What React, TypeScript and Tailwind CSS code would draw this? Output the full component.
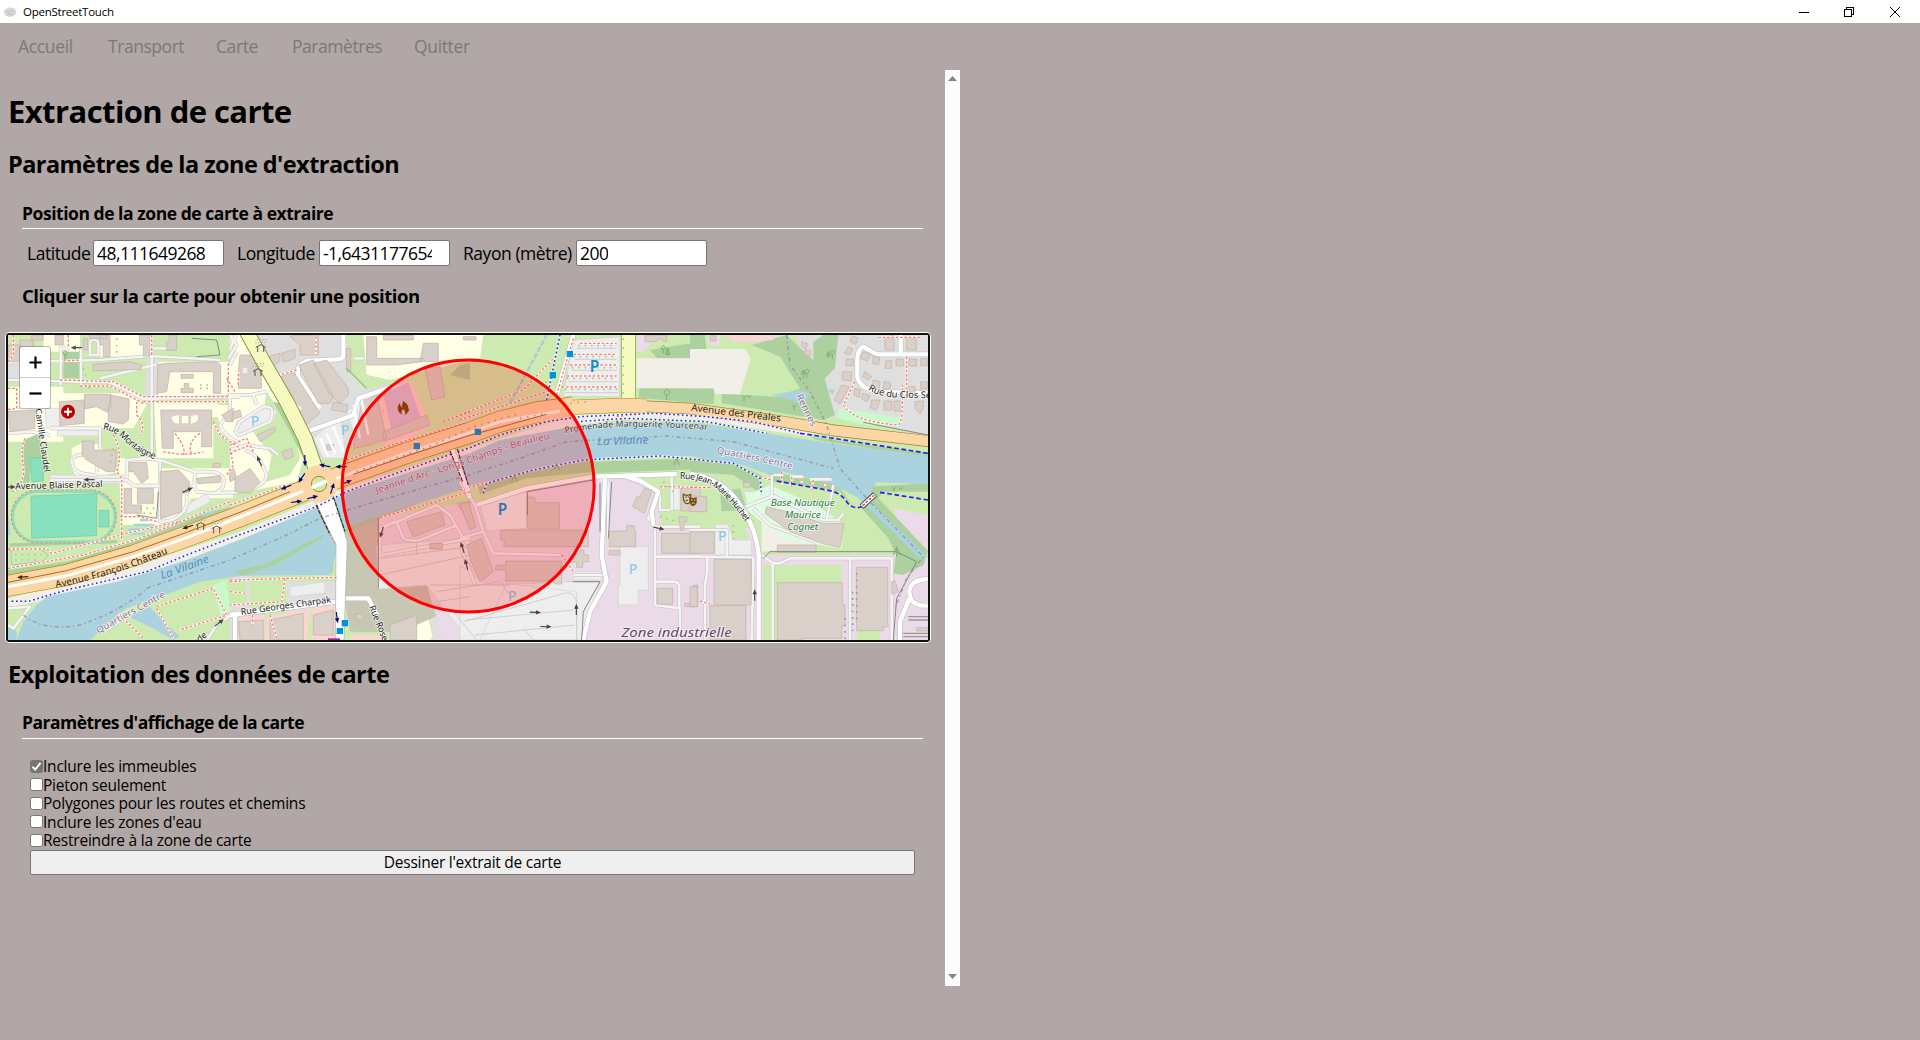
import React from "react";

type Quad = [string, string, string, string];

/* The map is divided into four side-by-side sheets, each 690 units wide. */
const SHEETS = [0, 690, 1380, 2070];

function Layer({
  d,
  fill = "none",
  stroke = "none",
  w = 0,
  dash,
  cap = "butt",
}: {
  d: Quad;
  fill?: string;
  stroke?: string;
  w?: number;
  dash?: string;
  cap?: "butt" | "round";
}) {
  return (
    <g fill={fill} stroke={stroke} strokeWidth={w} strokeDasharray={dash} strokeLinecap={cap} strokeLinejoin="round">
      {d.map((p, i) => (p ? <path key={i} d={p} transform={`translate(${SHEETS[i]} 0)`} /> : null))}
    </g>
  );
}

const YELLOW: Quad = [
  "M24 185H190V350H24z M170 205H400L440 240L400 310H170z M300 30H455V95H300z M130 30H240V80H130z M470 110H700V215H460z M462 235H655V275L600 280V300H640V400H470z M355 400H480V600H365z M480 430H600L560 560L480 600z M650 240H720V370L660 320z M215 370L250 350L300 360L352 440L240 475L215 430z M690 30H720V215H690z M560 430H700V520H570z",
  "M0 30H40L130 200L190 330L220 400L200 470L0 510z M400 30H720V105L480 165L410 150z M520 900L590 860L640 900L600 945H530z",
  "M0 30H70L60 100H0z",
  "",
];
const GREY: Quad = [
  "M24 110H60V170H24z M440 100H475V210H435z",
  "M75 30H350V130L410 195L520 165L580 300L350 370L262 410L130 200z M0 740H60V945H0z M170 770H320V860H170z M590 860L640 850L720 945H610z",
  "",
  "M120 30H270V50H120z M320 30H714V330L430 275L330 100z",
];
const GRASS: Quad = [
  "M65 100H130V160H65z",
  "M110 200L190 320L210 400L180 450L110 470L125 390L60 310L100 260z M410 150L480 165L440 185L400 190L340 130L360 110z M60 770L160 770L150 820L90 815z M0 765H50V840H0z",
  "",
  "",
];
const FOREST: Quad = [
  "M192 80H238V160H190z M70 345L120 325L125 400H90V470L70 475z M30 655L350 645L352 655L30 665z M24 735L200 710L400 650L530 590L690 545V552L400 668L200 725L24 752z M560 760L720 700V735L600 770z",
  "M130 230L150 235L240 400L225 410L180 320z M290 640L312 660L308 745L280 745z M340 605L440 570L580 530L440 585L345 620z M690 120L720 115V165L660 150z",
  "M570 75L720 50V100L600 110z M540 180L720 190V235L535 218z M400 410L720 400V432L400 445z M50 470L300 410L402 405V440L200 460L60 508z",
  "M0 30H45L50 85L0 100z M185 60L290 30L395 130L435 270L400 285L95 235V207L260 215L330 190L270 95z M0 190H75L70 237L0 235z M370 50L400 30H445L435 130L400 165L370 120z M0 398L110 402L215 452L213 512L190 490L130 450L0 440z M360 335L714 383V397L380 345z M530 485L714 475V500L580 500L565 520L714 678L700 720L640 750L610 745L618 690L595 640L515 550z M90 500L150 490L170 555L95 558z M240 440L440 475L490 545L450 500L240 468z",
];
const LIGHT: Quad = [
  "",
  "",
  "M530 100H720V190H530z",
  "M0 72H165L182 100L150 207H75L70 190H0z M215 560L380 650L370 665L215 680z",
];
const PARKING: Quad = [
  "M150 450H370V475H150z M172 315H300V333H172z M560 540L620 505L632 530L560 568z M135 250H180V310H140z",
  "M20 290L120 240L140 260L130 290L40 330L15 325z M250 340L330 270L350 400L280 400z M350 260L420 210L445 320L380 350z M180 785L285 770V805L180 815z M440 660L720 640V945L640 850L590 780L445 792z",
  "M60 540L200 500V610L80 617z M340 740H425V765H340z M480 665H565V795H535V840H475V780H480z M340 45L480 35L478 215L310 213z M0 720L80 780L340 770L420 770L370 945H0z M140 775L350 800V945H60z M630 490H660V555H630z",
  "M75 598H115L130 645H185V690H75z M160 500H200L215 530L180 545z",
];
const PINKISH: Quad = [
  "",
  "M35 870H105L100 945H20z M110 875L240 850L230 945H105z M245 850L325 840V945H245z M440 205L475 195L530 345L455 360z M360 930H470V945H360z M475 190L540 165L605 300L530 345z",
  "",
  "M90 30H245L250 45L150 50z",
];
const BUILDINGS: Quad = [
  "M24 60H60V110H24z M60 45H100V70H60z M95 30H130V45H95z M165 30H190V60H165z M250 40H262V75H250z M300 30H330V95H310V60H300z M270 30H320V40H270z M418 30H450V93H430V60H418z M508 30H530V75H500V50H508z M280 118L390 110L425 120V133L310 137H280z M178 230L253 225V295L180 302z M253 208H332V248L322 262L290 245L253 252z M333 210L388 222L385 285L370 297L325 290V250z M24 260L104 254L105 310L30 320z M474 118L500 115L650 110L662 120V205H640V140H510L500 200L470 205z M543 148H580V160H543z M553 175H566V190H580V203H543V190H553z M482 255H635V365H605V320H520V370H487z M246 348H282V375H350L345 440H320L260 405L246 390z M387 412H440L445 460L425 475L400 440H387z M372 490H395V540H425V565H372z M412 490H460V535H412z M480 440L537 435L568 470V500L545 505V560L482 582z M590 460L662 452V472L592 476z M640 415H660V427H637z M665 270L700 250V290L680 290z M686 435L700 428L710 460L690 470z",
  "M30 90H90L95 190H25V140z M115 95L150 85V110L125 125z M155 85L195 72V100L160 112z M180 35L190 30H265V90H210V60z M130 165L190 140L270 265L215 310L195 290z M350 70H362V140H350z M205 120L250 105L310 215L300 235L265 235z M250 115L290 105L355 190V210L330 235L300 210z M310 230L355 240L350 262L305 255z M410 35H440V100H580L575 110L500 120H410z M460 30H550V45H460z M580 55H625V110H570z M10 260L30 255L35 275L5 285z M80 330L135 305V320L90 350z M155 380L185 370L190 395L165 405z M15 460L60 430L90 470L60 505L15 500z M585 130L630 125L645 215L605 225z M395 230L440 210L470 340L420 360L370 370z M460 320L590 270L600 300L460 350z M530 590L635 560L645 600L550 635z M600 655H637V672H600z M680 535L720 530V590z M25 890L100 885V945H30z M120 885L220 865V945H120z M250 870L310 855V930H250z M375 870L395 865L400 880L385 888z M480 900L560 870V945H480z M290 360L310 357L311 375H290z",
  "M10 35H48V45H10z M202 515L225 518V533H298V610H202z M122 615H385V665H132V645H122z M20 660L65 640L100 740L60 770L30 700z M137 708H305V777H283V768H137V735H105L110 720H137z M345 685H360V675H372V690H385V710H368V727H350V712H332V700H345z M553 490L577 495L553 565L518 545L530 515H540z M448 618H500V602H523V617H527V665H448z M447 677H480V690H447z M592 790H638V838H592z M605 625H720V685H605z M674 835H700V780H713V845H674z M663 490H720V558H663z M657 575H680V590H672V615H660V590H657z M555 30H620V50L600 40L585 50H555z M0 540L25 530L48 605L30 615z",
  "M0 512L50 515V560H0z M0 620H73V685H0z M72 703H183V840H72z M60 842H168V945H60z M262 773H457V838L465 840V903H455V940H340V945H262z M500 727H593V893L595 905H580V917H500z M262 660H378V682H262z M230 545L290 560L400 595H462L450 668L395 655L300 620L225 565z M605 770L615 768L625 800L605 808z M680 908H714V918H680z M455 180L478 185L450 237L432 225z M475 65L488 72L480 90L464 84z M487 32L505 40L497 58L480 50z M520 80L543 88L532 108L512 100z M550 92L570 98L565 120L548 115z M468 102H490V122H468z M457 140L485 140L483 168L457 165z M525 140L545 155L535 165L518 155z M587 108L605 106V130H585z M618 102H640V123H618z M657 102H680V123H657z M692 100H712V122H692z M550 165L570 170L568 190L545 185z M582 170L602 172L600 192H580z M692 170H712V192H692z M652 185H675V202H652z M495 190L512 195L507 217L492 210z M518 205L540 212L530 230L515 222z M545 225L570 225L560 255L540 248z M582 228H605V255H582z M612 228H635V258H612z M675 230L700 228V250L690 268L675 250z M648 40H680V75H650z M585 40H612V75H585z M600 32H610V40H600z M335 50L352 55L348 72L335 65z M345 75H362V92H345z M0 785H22V845H0z M160 472H182V487H160z M60 32H78V48H60z",
];
const PATHS_RED: Quad = [
  "M40 30V90L24 110 M24 190H50V250L24 255 M205 30V65 M190 108L240 105 M180 165L340 170L430 215H690 M430 230H690 M240 183H330L430 235 M75 340Q60 370 72 440Q60 500 35 500 M360 575H420L470 590 M455 30V95 M685 115V210 M680 160L705 200 M640 290L660 330L720 370 M410 230V270Q440 300 420 330 M340 330Q370 380 350 440L365 460V645 M525 325Q560 370 550 390 M600 325Q560 350 575 390 M490 380Q560 395 610 380 M690 370L700 420L680 450 M24 672H140L155 685L400 620L540 590 M470 850L520 940 M470 845L640 790L680 870L540 915 M350 860L430 940 M24 730L250 690L420 640L690 530 M690 770H720",
  "M0 765L320 757 M25 180V140 M0 540L170 480 M130 155L200 135 M0 360L50 340L70 380 M165 760L155 830L0 840 M0 800L45 805 M68 870V900 M120 870L140 940 M0 385L60 360 M350 405L500 355L720 290 M450 578L720 500 M640 290L720 260 M258 35V90",
  "M0 270L190 195L280 100 M0 285L200 220L260 200 M360 55H470 M340 88H470 M330 120H470 M320 153H470 M305 186H475 M0 495L90 470 M340 40L290 210 M305 690L340 740 M600 485L720 487 M470 275L530 268",
  "M0 487H60 M565 37H690 M495 170L460 240Q490 290 625 300Q640 290 637 180 M650 95V190 M210 455L245 465 M275 440V480 M305 455V485 M335 460V485 M370 465L365 495 M405 470V500 M30 828L60 838",
];
const MINOR: Quad = [
  "M24 112L300 105L450 93L660 105 M24 165L330 172L430 222L720 215 M300 160L470 118 M455 90V400 M182 65V180 M243 65V180 M182 70H210 M270 50V90 M270 50Q280 40 295 50V90H265 M24 325L90 320L150 330 M150 310H300V370 M24 255H60 M150 465H380L400 482H480 M380 460V405L430 400L480 405V590Q540 590 560 540V500L580 480 M480 405L585 440L620 440Q670 440 672 470Q670 500 640 505L590 500Q580 490 585 440 M640 505L720 500 M690 210V260L660 300Q670 330 720 355 M690 30L710 60L685 100 M530 70H460 M220 400Q230 385 250 390 M215 400Q210 450 290 450 M290 440V400 M24 850L90 845L40 910L24 900 M320 915L370 880 M620 945L650 900L700 865H720",
  "M0 210H60L110 200 M70 210L80 240 M0 375L50 360L120 370L145 390 M45 375Q90 390 110 450Q110 490 0 505 M20 310L30 290L100 245Q140 240 120 290L30 330Q15 330 20 310 M450 690V620Q460 600 500 590L620 540L660 570L700 640L720 660 M500 590L520 640Q540 650 570 645L680 600 M455 690L720 640 M20 30L0 70 M0 120L20 80 M375 100H400",
  "M0 470L45 540L70 620L100 685L300 690 M0 640L70 620 M420 465L445 470V640 M425 720L440 750H340 M345 750H425 M0 660L45 780 M535 450L545 475L600 510V555H630 M635 450V555 M500 455L590 500L565 580L585 605H720 M585 605V840L660 850V945 M585 695H720 M585 770H640Q660 770 658 790V850",
  "M0 695L185 697 M110 695V615H0 M52 697V740L45 780V945 M190 697V720L185 945 M215 690L250 715H270L300 700H605V945 M248 715V945 M480 703V945 M165 545L245 515V450 M245 510L400 585H445L460 565 M410 585L430 480 M250 450H280 M300 455H340 M360 463H425 M190 550L240 600L375 650",
];
const STREETS: Quad = [
  "",
  "M340 30V90Q340 103 320 103L230 108Q195 120 205 155L270 250 M230 320L370 270L385 220L500 180 M328 820H415L440 870 M0 870L320 830 M15 860V945 M665 370L720 520",
  "M50 540L200 490L400 455L650 447 M435 460L425 690L440 770L390 860L370 945 M500 455L545 470L595 500L575 560L580 600 M290 210L340 30",
  "M0 447Q100 460 150 540Q200 610 206 690V945 M714 88H560L520 65Q500 75 502 110V155Q510 190 560 200L714 205 M632 88V30 M714 762Q660 765 658 800Q660 840 700 842H714 M658 820L630 890V945",
];

const BLUEDOTS =
  "M35 829H85L200 795L440 740L560 690L690 640L950 545L1040 500L1160 455L1410 368L1500 330L1640 290L1740 275L1960 265L2120 275L2260 290L2400 325 M1450 505L1460 475L1600 435L1750 405L1980 393L2200 415L2280 460L2285 510 M1640 225L1680 30 M1730 290L1880 280L2120 290L2300 325";

function Arrow({ x, y, a, c = "#444" }: { x: number; y: number; a: number; c?: string }) {
  return (
    <g transform={`translate(${x} ${y}) rotate(${a})`} fill={c} stroke={c}>
      <path d="M-17 0H6" strokeWidth="3.5" />
      <path d="M17 0L2 -6.500V6.500z" stroke="none" />
    </g>
  );
}

function Label({
  x,
  y,
  a = 0,
  s = 28,
  len,
  c = "#222",
  italic,
  weight = 400,
  halo = "#fff",
  children,
}: {
  x: number;
  y: number;
  a?: number;
  s?: number;
  len?: number;
  c?: string;
  italic?: boolean;
  weight?: number;
  halo?: string;
  children: string;
}) {
  return (
    <text
      transform={`translate(${x} ${y}) rotate(${a})`}
      fontSize={s}
      fontWeight={weight}
      textLength={len}
      lengthAdjust="spacingAndGlyphs"
      fill={c}
      stroke={halo}
      strokeOpacity={0.7}
      strokeWidth={halo === "none" ? 0 : 5}
      paintOrder="stroke"
      fontStyle={italic ? "italic" : "normal"}
    >
      {children}
    </text>
  );
}

function Shelter({ x, y }: { x: number; y: number }) {
  return (
    <g transform={`translate(${x} ${y})`} fill="none" stroke="#555" strokeWidth="3">
      <path d="M-15 -3L0 -11L15 -3 M-9 -5V11 M9 -5V11" />
      <path d="M-16 -18H14 M-12 -26H18" strokeDasharray="3 6" stroke="#a39a82" />
    </g>
  );
}

const ROAD_L =
  "M10 785L200 750L400 692L560 634L720 574L950 482L1030 452L1220 384L1410 323L1500 290L1610 262L1720 247";
const ROAD_R = "M1705 247L1880 241L2070 251L2350 290L2500 316L2800 350";

function CityMap() {
  return (
    <svg
      viewBox="24 30 2760 915"
      className="block h-[305px] w-[920px]"
      preserveAspectRatio="none"
      fontFamily='"Noto Sans", "Open Sans", sans-serif'
    >
      <defs>
        <path id="montaigne" d="M308 313Q345 318 372 345Q410 385 470 405" />
        <path id="huchet" d="M2040 462Q2110 460 2150 492Q2205 540 2246 606" />
        <path id="clos" d="M2604 194Q2640 216 2690 218L2800 220" />
        <path id="jeanne" d="M1130 505Q1330 440 1450 400Q1560 358 1658 340" />
        <path id="francois" d="M168 788Q350 752 510 682" />
        <path id="prom" d="M1696 325Q1830 298 1960 307Q2060 308 2130 316" />
        <path id="quartiers" d="M2150 385Q2250 402 2390 436" />
      </defs>

      <rect x="24" y="30" width="2760" height="915" fill="#cdebb0" />
      <Layer d={YELLOW} fill="#ffffe5" />
      <Layer d={GREY} fill="#e0dfdf" />
      <Layer d={GRASS} fill="#cdebb0" />
      <path d="M1030 605L1140 575V790L1285 780L1340 860L1200 922L1050 920L1035 830z" fill="#c7c7b4" />
      <path
        d="M1135 580L1410 530L1780 462L1900 458L1980 500L1985 610H2250L2280 690H2680L2784 720V945H1330L1280 780L1135 790z"
        fill="#ebdbe8"
      />
      <path d="M1960 470L2070 450L2160 520L2240 620L2250 640L2180 645L2150 600H1985z M2290 680H2680V690H2290z" fill="#cdebb0" />
      <path d="M2680 550L2784 570V690L2700 610z M2670 690L2784 700V945H2690z M2125 30H2160V60H2125z M1910 30H1980L1930 80H1910z" fill="#ebdbe8" />
      <path d="M1980 558L2080 562L2050 600H1990z" fill="#cdebb0" />
      <path d="M2290 720H2525V773H2330V945H2290z M2570 915H2640V945H2570z" fill="#cdebb0" />
      <Layer d={FOREST} fill="#add19e" />
      <Layer d={LIGHT} fill="#f2efe9" />
      <Layer d={PARKING} fill="#eeeeee" stroke="#d2d2d2" w={2} />
      <Layer d={PINKISH} fill="#fbd5d0" />
      <path d="M1150 210L1225 170L1270 300L1180 340z" fill="#d9c4d8" />

      {/* river and canals */}
      <path d="M24 850L110 830L360 780L690 655L1030 525L1410 405L1730 300L1880 280L2100 285L2430 335L2440 325L2100 265L1720 270L1410 370L1030 490L720 620L360 735L24 820z" fill="#f2efe9" />
      <path
        d="M50 945L70 890L110 840L140 815L360 768L560 705L720 645L950 548L1030 505L1410 385L1500 345L1730 302L1880 290L2100 295L2430 345L2570 365L2784 393V478L2630 472L2600 520L2784 695L2760 700L2570 515L2490 475L2350 440L2310 450L2230 420L2070 393L1980 392L1780 405L1580 442L1380 495L1140 572L1030 610L990 750L730 752L600 770L470 820L380 850L330 890L270 945z"
        fill="#aad3df"
      />
      <path d="M385 875L450 845L500 900L540 935L520 945L450 905z M24 560L32 630H24z M2315 210L2400 195L2430 205L2415 235z M24 905L50 920V945H24z M2485 192L2505 195L2500 207L2490 203z" fill="#aad3df" />
      <path d="M420 585H450 M400 600H462 M385 613H455 M385 626H435 M610 568L640 560 M620 555L660 545" stroke="#aad3df" strokeWidth="7" />
      <path d="M700 740L800 715L970 628L965 640L820 722L730 752z" fill="#add19e" />
      <path d="M2240 510L2310 480L2400 520L2480 560L2530 600L2525 672L2350 640L2240 555z" fill="#dffce2" />
      <path d="M2520 250L2710 280L2700 305L2600 300L2510 280z M640 780L680 765L690 860L660 870z" fill="#c8facc" />

      {/* running track */}
      <rect x="38" y="500" width="307" height="150" rx="75" fill="#cdebb0" stroke="#88e0be" strokeWidth="8" />
      <rect x="34" y="495" width="315" height="159" rx="79" fill="none" stroke="#fa8072" strokeWidth="3.500" strokeDasharray="8 6" />
      <path d="M93 513L290 506V632L95 640z M298 556H327V606H297z M90 400L130 397V468L95 470z" fill="#88e0be" stroke="#6fc9a6" strokeWidth="2" />
      <path d="M32 675L120 672L145 690L130 708L35 720z" fill="#cdebb0" stroke="#aaa" strokeWidth="2" />

      {/* minor streets and paths */}
      <Layer d={MINOR} stroke="#c4c0bf" w={11} />
      <Layer d={MINOR} stroke="#f4f4f4" w={8} />
      <Layer d={STREETS} stroke="#bbb" w={16} />
      <Layer d={STREETS} stroke="#fff" w={13} />
      <path d="M945 528L995 500L1042 650L1032 945H1006L1008 660z" fill="#fff" stroke="#aaa" strokeWidth="2" />
      <path d="M950 545L1005 655" stroke="#fa8072" strokeWidth="4" strokeDasharray="7 6" />
      <Layer d={BUILDINGS} fill="#d9d0c9" stroke="#c1b0a0" w={2} />
      <path d="M515 275Q515 295 537 296V270z M545 272H565V295H545z M573 272L593 270Q600 290 573 297z" fill="#ffffe5" />
      <path d="M728 128H742V145H728z M850 240L880 230L908 250L870 275z" fill="#f0eeea" />
      <Layer d={PATHS_RED} stroke="#fff" w={6} />
      <Layer d={PATHS_RED} stroke="#fa8072" w={4} dash="8 5" />

      {/* parking aisles */}
      <g stroke="#c9c9c9" strokeWidth="2.500" fill="none">
        <path d="M1140 700L1410 665 M1140 750L1410 690 M1290 780L1530 780 M1310 800L1500 770L1530 810 M1390 890L1700 803Q1730 805 1730 840V945 M1400 885L1720 855 M1425 930L1725 900 M1360 860L1430 945 M1570 910L1600 945 M1310 830L1410 815 M1250 690V650 M1700 770L1800 770L1750 860" />
        <path d="M960 340L985 395 M980 325L1005 385 M1000 305L1030 380 M1060 240L1080 340 M1085 225L1105 330" stroke="#fff" strokeWidth="7" />
        <path d="M1730 70H1850 M1725 103H1850 M1715 136H1850 M1705 170H1855 M1695 203H1855" />
      </g>
      <g stroke="#a2c98c" strokeWidth="5" strokeDasharray="5 14" fill="none">
        <path d="M1735 62H1850 M1720 95H1850 M1715 128H1850 M1700 160H1850 M1695 193H1855 M600 180H640 M600 190H640 M420 550H470 M430 565H470 M45 690H125 M45 705H115 M1990 470L2030 510 M1980 575L2030 590 M350 40V90 M2200 600V650 M250 130L270 200 M340 370L330 420 M1640 170L1610 190" />
        <path d="M2570 745V890 M2558 800V920 M2535 880V945" stroke="#999" />
      </g>
      <g stroke="#777" strokeWidth="2.500" fill="none">
        <path d="M1135 580V790 M1582 500V570 M1582 500L1780 465 M1800 475V620 M1720 770H1800L1750 860L1745 945 M1835 470L1825 640 M2310 680H2690L2750 710L2690 820L2680 945 M2590 292L2784 330 M575 40L650 45L660 90L590 95 M1040 130L1100 190 M2310 680L2290 700 M475 500L470 580L410 570" />
        <path d="M2725 875H2784 M2725 885H2784 M2710 925H2784 M2710 935H2784" strokeWidth="4" stroke="#999" />
      </g>

      {/* yellow road and main avenue */}
      <g fill="none" strokeLinejoin="round">
        <path d="M740 20L790 110L860 230L915 340L945 425" stroke="#7d8a2d" strokeWidth="46" />
        <path d="M740 20L790 110L860 230L915 340L950 440" stroke="#f7fabf" strokeWidth="41" />
        <path d="M1885 20V235" stroke="#8c9340" strokeWidth="44" />
        <path d="M1885 20V245" stroke="#f7fabf" strokeWidth="40" />
        <path d="M1870 40V210" stroke="#a2c98c" strokeWidth="5" strokeDasharray="5 22" />
        <path d={ROAD_L} stroke="#b8860b" strokeWidth="65" />
        <path d={ROAD_R} stroke="#a6782a" strokeWidth="35" />
        <path d="M1690 248L1860 241L1940 243" stroke="#b8860b" strokeWidth="44" />
        <path d="M1690 248L1860 241L1940 243" stroke="#fcd6a4" strokeWidth="41" />
      </g>
      <circle cx="957" cy="477" r="56" fill="#fcd6a4" />
      <g fill="none" strokeLinejoin="round">
        <path d={ROAD_L} stroke="#fcd6a4" strokeWidth="61" />
        <path d={ROAD_R} stroke="#fcd6a4" strokeWidth="31" />
        <path d="M10 788L200 752L400 695L560 638L720 576L910 498 M1010 460L1220 384L1410 323L1500 290L1680 258" stroke="#fff" strokeWidth="9" />
        <path d="M24 772L200 737L400 680L560 622L720 562L870 500 M1060 448L1220 393L1400 334L1640 268" stroke="#9c7427" strokeWidth="3" />
      </g>
      <circle cx="957" cy="477" r="23" fill="#cdebb0" stroke="#b8860b" strokeWidth="3" />
      <path d="M935 488L980 468" stroke="#fff" strokeWidth="11" />
      <path d="M1070 440L1300 360L1420 305L1560 265 M1560 280L1640 265 M1690 235L1760 230" stroke="#b4b36a" strokeWidth="5" strokeDasharray="5 16" fill="none" />

      {/* cycle routes and boundaries */}
      <path d={BLUEDOTS} fill="none" stroke="#fff" strokeWidth="7" opacity="0.6" />
      <path d={BLUEDOTS} fill="none" stroke="#2222f0" strokeWidth="4.500" strokeDasharray="5 8" />
      <path d="M2400 325L2500 340L2784 385 M2330 468L2480 495Q2520 500 2540 530Q2560 560 2600 540 M2640 502L2784 525" fill="none" stroke="#2222f0" strokeWidth="5" strokeDasharray="14 8" />
      <path
        d="M70 870Q130 920 240 900Q380 850 440 790L690 705L860 630L960 580L1060 550L1240 497L1400 452L1560 400L1700 350L2000 333L2200 350L2500 430 M2360 30L2370 120L2430 200L2480 300L2520 430L2600 520L2770 695L2720 760L2685 850"
        fill="none"
        stroke="#9e7da0"
        strokeWidth="4.500"
        strokeDasharray="12 9 4 9"
        opacity="0.7"
      />
      <path d="M1355 375L1405 500" stroke="#fff" strokeWidth="14" />
      <path d="M1350 378L1388 470 M1372 372L1405 480 M948 540L988 625 M1000 515L1035 620" stroke="#333" strokeWidth="3.500" strokeDasharray="14 3" />
      <path d="M1530 235L1640 30" stroke="#a9c9d9" strokeWidth="7" strokeDasharray="16 6" />
      <path d="M2585 545L2625 508" stroke="#333" strokeWidth="17" />
      <path d="M2586 544L2624 509" stroke="#fff" strokeWidth="12" />
      <path d="M2588 542L2622 511" stroke="#f05050" strokeWidth="5" strokeDasharray="8 5" />
      <path d="M984 943H1020" stroke="#a020a0" strokeWidth="6" />
      <g fill="none" stroke="#7fae72" strokeWidth="3">
        <path d="M1990 85V70M1985 75a6 8 0 1 1 10 0M2003 92V72M1996 88L2003 68L2010 88z M2410 160V140M2403 150L2410 135L2417 150 M2420 160V145a6 6 0 1 1 1 0 M2485 100V85M2478 95L2485 80L2492 95M2497 102V88a6 6 0 1 1 1 0 M2000 225V210a8 8 0 1 1 1 0 M2225 210l7 8l7-8M2232 230v-12M2240 210l7 8l7-8 M2375 238l7 8l7-8M2382 255v-10 M2675 485l7 8l7-8M2682 500v-8M2695 485l7 8l7-8 M1535 470L1543 450L1551 470 M1662 435L1670 415L1678 435 M2022 420L2030 400L2038 420 M2680 690L2690 665L2700 690M2690 695V670 M195 105V90a6 6 0 1 1 1 0" />
      </g>

      {/* direction arrows */}
      <Arrow x={229} y={68} a={180} />
      <Arrow x={267} y={464} a={180} />
      <Arrow x={563} y={495} a={-25} />
      <Arrow x={30} y={486} a={0} />
      <Arrow x={563} y={606} a={162} c="#3b2300" />
      <Arrow x={68} y={756} a={176} c="#3b2300" />
      <Arrow x={658} y={893} a={-38} />
      <Arrow x={778} y={408} a={-115} />
      <Arrow x={915} y={407} a={88} c="#000080" />
      <Arrow x={905} y={459} a={124} c="#000080" />
      <Arrow x={858} y={487} a={158} c="#000080" />
      <Arrow x={890} y={530} a={-8} c="#000080" />
      <Arrow x={938} y={517} a={-14} c="#000080" />
      <Arrow x={974} y={422} a={-168} c="#000080" />
      <Arrow x={1023} y={425} a={180} c="#000080" />
      <Arrow x={997} y={490} a={-72} c="#000080" />
      <Arrow x={1040} y={472} a={-22} c="#000080" />
      <Arrow x={1011} y={878} a={83} c="#000080" />
      <Arrow x={1145} y={622} a={108} />
      <Arrow x={1387} y={667} a={-108} />
      <Arrow x={1399} y={718} a={-105} />
      <Arrow x={1606} y={862} a={2} />
      <Arrow x={1638} y={905} a={2} />
      <Arrow x={1729} y={853} a={-90} />
      <Arrow x={1977} y={610} a={12} />
      <Arrow x={2264} y={810} a={-90} />
      <Shelter x={602} y={604} />
      <Shelter x={650} y={614} />
      <Shelter x={782} y={70} />
      <Shelter x={774} y={142} />

      {/* symbols */}
      <circle cx="204" cy="260" r="21" fill="#bf0000" />
      <path d="M204 248V272M192 260H216" stroke="#fff" strokeWidth="6" />
      <g fill="#0092da">
        <path d="M1025 885h19v19h-19z M1010 909h19v18h-19z M1241 354h19v19h-19z M1424 311h19v19h-19z M1700 78h19v18h-19z M1649 141h19v19h-19z" />
      </g>
      <path
        d="M1207 268C1190 262 1190 243 1200 234C1200 242 1203 246 1208 248C1202 240 1212 234 1207 228C1222 233 1228 246 1224 254C1227 252 1227 249 1227 247C1230 256 1222 266 1214 271C1220 260 1212 258 1211 252C1204 256 1202 262 1207 268z"
        fill="#734a08"
      />
      <path d="M2050 508Q2060 514 2072 508V528Q2066 540 2056 534Q2048 526 2050 508z" fill="none" stroke="#734a08" strokeWidth="3.500" />
      <path d="M2068 516Q2080 522 2090 516V534Q2084 546 2075 542Q2066 534 2068 516z" fill="#734a08" />
      <path d="M2055 516h5M2063 516h5M2056 526h8" stroke="#734a08" strokeWidth="3" />
      <path d="M2073 525h5M2082 525h4M2075 536q5-6 9 0" stroke="#fff" strokeWidth="2.500" fill="none" />

      <Label x={752} y={302} s={42} c="#8ccbe8" weight={500} halo="none">P</Label>
      <Label x={1022} y={330} s={42} c="#8ccbe8" weight={500} halo="none">P</Label>
      <Label x={1769} y={140} s={46} c="#0092da" weight={600} halo="none">P</Label>
      <Label x={1493} y={571} s={46} c="#0092da" weight={600} halo="none">P</Label>
      <Label x={1524} y={829} s={42} c="#8ccbe8" weight={500} halo="none">P</Label>
      <Label x={1886} y={747} s={42} c="#8ccbe8" weight={500} halo="none">P</Label>
      <Label x={2154} y={647} s={42} c="#8ccbe8" weight={500} halo="none">P</Label>

      {/* place names */}
      <Label x={46} y={493} a={-1.5} s={27} len={262}>Avenue Blaise Pascal</Label>
      <Label x={106} y={252} a={82} s={26} len={192}>Camille Claudel</Label>
      <Label x={724} y={870} a={-8} s={27} len={272}>Rue Georges Charpak</Label>
      <Label x={1107} y={846} a={68} s={27} len={150}>Rue Rosema</Label>
      <Label x={585} y={962} a={-38} s={26}>ude</Label>
      <Label x={486} y={763} a={-20} s={33} len={152} c="#5b8dbd" italic halo="none">La Vilaine</Label>
      <Label x={1792} y={361} a={-2} s={33} len={154} c="#5b8dbd" italic halo="none">La Vilaine</Label>
      <Label x={295} y={926} a={-29} s={28} len={232} c="#8d6f92">Quartiers Centre</Label>
      <Label x={2388} y={212} a={64} s={28} len={105} c="#8d6f92">Rennes</Label>
      <Label x={2073} y={257} a={7} s={29} len={270} halo="none">Avenue des Préales</Label>
      <Label x={2312} y={543} s={27} len={192} c="#2f7a45" italic>Base Nautique</Label>
      <Label x={2354} y={579} s={27} len={108} c="#2f7a45" italic>Maurice</Label>
      <Label x={2362} y={615} s={27} len={92} c="#2f7a45" italic>Cognet</Label>
      <Label x={1864} y={935} s={36} len={331} c="#664766" italic>Zone industrielle</Label>
      <g fontSize="28" fill="#222" stroke="#ffffff" strokeOpacity="0.75" strokeWidth="5" paintOrder="stroke">
        <text><textPath href="#montaigne" textLength="182">Rue Montaigne</textPath></text>
        <text fontSize="26"><textPath href="#huchet" textLength="248">Rue Jean-Marie Huchet</textPath></text>
        <text><textPath href="#clos">Rue du Clos Senestre</textPath></text>
        <text strokeWidth="0" fontSize="29"><textPath href="#francois" textLength="352">Avenue François Château</textPath></text>
        <text fontSize="26" strokeWidth="3" fill="#333"><textPath href="#prom" textLength="428">Promenade Marguerite Yourcenar</textPath></text>
        <text fill="#8d6f92"><textPath href="#quartiers" textLength="230">Quartiers Centre</textPath></text>
        <text fill="#8a5f88" strokeWidth="3"><textPath href="#jeanne" textLength="545">Jeanne d'Arc - Longs Champs - Beaulieu</textPath></text>
      </g>

      {/* selected extraction radius */}
      <circle cx="1404.500" cy="483" r="378" fill="#ff0000" fillOpacity="0.2" stroke="#ff0000" strokeWidth="9" />
    </svg>
  );
}

const MENU = [
  { label: "Accueil", cls: "w-[90px] tracking-[-0.35px]" },
  { label: "Transport", cls: "w-[108px] tracking-[-0.45px]" },
  { label: "Carte", cls: "w-[76px] tracking-[-0.4px]" },
  { label: "Paramètres", cls: "w-[122px] tracking-[-0.45px]" },
  { label: "Quitter", cls: "w-[80px] tracking-[-0.35px]" },
];

const OPTIONS = [
  { label: "Inclure les immeubles", checked: true },
  { label: "Pieton seulement", checked: false },
  { label: "Polygones pour les routes et chemins", checked: false },
  { label: "Inclure les zones d'eau", checked: false },
  { label: "Restreindre à la zone de carte", checked: false },
];

function TitleBar() {
  return (
    <header className="flex h-[23px] items-center bg-white">
      <svg viewBox="0 0 14 12" className="ml-[3px] h-3 w-3.5">
        <path d="M1 7Q0 4 3 3Q5 0 8 2Q12 1 13 5Q14 9 10 10Q7 12 4 10Q1 10 1 7z" fill="#d9d9d9" />
        <path d="M3 5l3 2l2-3l3 2M4 9l3-1l3 1" stroke="#bdbdbd" fill="none" />
      </svg>
      <span className="ml-[6px] text-[11.500px] tracking-[-0.25px] whitespace-nowrap text-black">OpenStreetTouch</span>
      <div className="mr-5 ml-auto flex items-center text-black">
        <svg viewBox="0 0 10 10" className="mr-[35px] h-2.5 w-2.5" stroke="currentColor" shapeRendering="crispEdges">
          <path d="M0 5.500H10" />
        </svg>
        <svg viewBox="0 0 10 10" className="mr-9 h-2.5 w-2.5" fill="none" stroke="currentColor" shapeRendering="crispEdges">
          <path d="M.5 2.500H7.500V9.500H.5z M2.500 2.500V.5H9.500V7.500H7.500" />
        </svg>
        <svg viewBox="0 0 10 10" className="h-2.5 w-2.5" stroke="currentColor">
          <path d="M0 0L10 10M10 0L0 10" />
        </svg>
      </div>
    </header>
  );
}

function Field({ label, value, cls }: { label: string; value: string; cls: string }) {
  return (
    <label className={"flex h-[26px] items-center justify-between whitespace-nowrap " + cls}>
      <span>{label}</span>
      <span className="flex h-[26px] w-[131px] items-center rounded-[2px] border border-[#767676] bg-white pr-[17px] pl-[3px]">
        <span className="overflow-hidden tracking-[-0.52px]">{value}</span>
      </span>
    </label>
  );
}

export default function App() {
  return (
    <div className='h-[1040px] w-full overflow-hidden bg-[#b0a7a6] font-["Open_Sans","Noto_Sans",sans-serif] text-black'>
      <TitleBar />
      <nav className="flex h-[47px] items-center pl-[18px] text-[17.500px] text-[#7d7878]">
        {MENU.map((m) => (
          <a key={m.label} className={"whitespace-nowrap " + m.cls}>
            {m.label}
          </a>
        ))}
      </nav>
      <div className="flex h-[916px] w-[960px]">
        <main className="w-[945px]">
          <h1 className="mt-[21px] ml-2 h-10 text-[31px] leading-10 font-bold tracking-[-0.58px]">Extraction de carte</h1>
          <h2 className="mt-[18px] ml-2 h-[30px] text-[23.500px] leading-[30px] font-bold tracking-[-0.56px]">
            Paramètres de la zone d'extraction
          </h2>
          <h3 className="mt-[22px] mr-[22px] ml-[22px] h-7 border-b border-white text-[17.500px] leading-6 font-bold tracking-[-0.46px]">
            Position de la zone de carte à extraire
          </h3>
          <div className="mt-[11px] ml-[27px] flex gap-[13px] text-[17.500px] tracking-[-0.45px]">
            <Field label="Latitude" value="48,111649268" cls="w-[197px]" />
            <Field label="Longitude" value="-1,64311776544" cls="w-[213px]" />
            <Field label="Rayon (mètre)" value="200" cls="w-[244px]" />
          </div>
          <h3 className="mt-[18px] ml-[22px] h-6 text-[18.500px] leading-6 font-bold tracking-[-0.42px]">
            Cliquer sur la carte pour obtenir une position
          </h3>
          <div className="relative mt-6 ml-[5px] w-[926px] rounded-[4px] border border-white bg-[#101010] p-[2px]">
            <CityMap />
            <div className="absolute top-[13px] left-[13px] flex w-[32px] flex-col rounded-[3px] border border-black/25 bg-white bg-clip-padding text-center">
              <span className="flex h-[31px] items-center justify-center border-b border-[#ccc]">
                <svg viewBox="0 0 13 13" className="h-[13px] w-[13px]" stroke="#000" strokeWidth="2.200">
                  <path d="M6.500 .5V12.500M.5 6.500H12.500" />
                </svg>
              </span>
              <span className="flex h-[30px] items-center justify-center">
                <svg viewBox="0 0 13 13" className="h-[13px] w-[13px]" stroke="#000" strokeWidth="2.200">
                  <path d="M.5 6.500H12.500" />
                </svg>
              </span>
            </div>
          </div>
          <h2 className="mt-[16px] ml-2 h-[30px] text-[23.500px] leading-[30px] font-bold tracking-[-0.46px]">
            Exploitation des données de carte
          </h2>
          <h3 className="mt-[21px] mr-[22px] ml-[22px] h-[29px] border-b border-white text-[17.500px] leading-6 font-bold tracking-[-0.52px]">
            Paramètres d'affichage de la carte
          </h3>
          <div className="mt-[18px] ml-[30px] flex w-[885px] flex-col">
            {OPTIONS.map((o) => (
              <label key={o.label} className="flex h-[18.500px] text-[15.500px] leading-[18.500px] tracking-[-0.22px]">
                <span
                  className={
                    "mt-[2.500px] flex h-[13px] w-[13px] items-center justify-center rounded-[2.500px] border " +
                    (o.checked ? "border-[#757575] bg-[#757575]" : "border-[#767676] bg-white")
                  }
                >
                  {o.checked && (
                    <svg viewBox="0 0 11 11" className="h-[11px] w-[11px]" fill="none" stroke="#fff" strokeWidth="2">
                      <path d="M1.500 5.800L4.200 8.500L9.500 1.800" />
                    </svg>
                  )}
                </span>
                {o.label}
              </label>
            ))}
            <button className="h-[25px] rounded-[2px] border border-[#767676] bg-[#efefef] text-[15.500px] leading-[23px] tracking-[-0.25px]">
              Dessiner l'extrait de carte
            </button>
          </div>
        </main>
        <div className="flex w-[15px] flex-col items-center justify-between bg-[#fcfcfc] pt-[6px] pb-[7px]">
          <svg viewBox="0 0 9 5" className="h-[5px] w-[9px]">
            <path d="M0 5L4.500 0L9 5z" fill="#858585" />
          </svg>
          <svg viewBox="0 0 9 5" className="h-[5px] w-[9px]">
            <path d="M0 0H9L4.500 5z" fill="#858585" />
          </svg>
        </div>
      </div>
    </div>
  );
}
